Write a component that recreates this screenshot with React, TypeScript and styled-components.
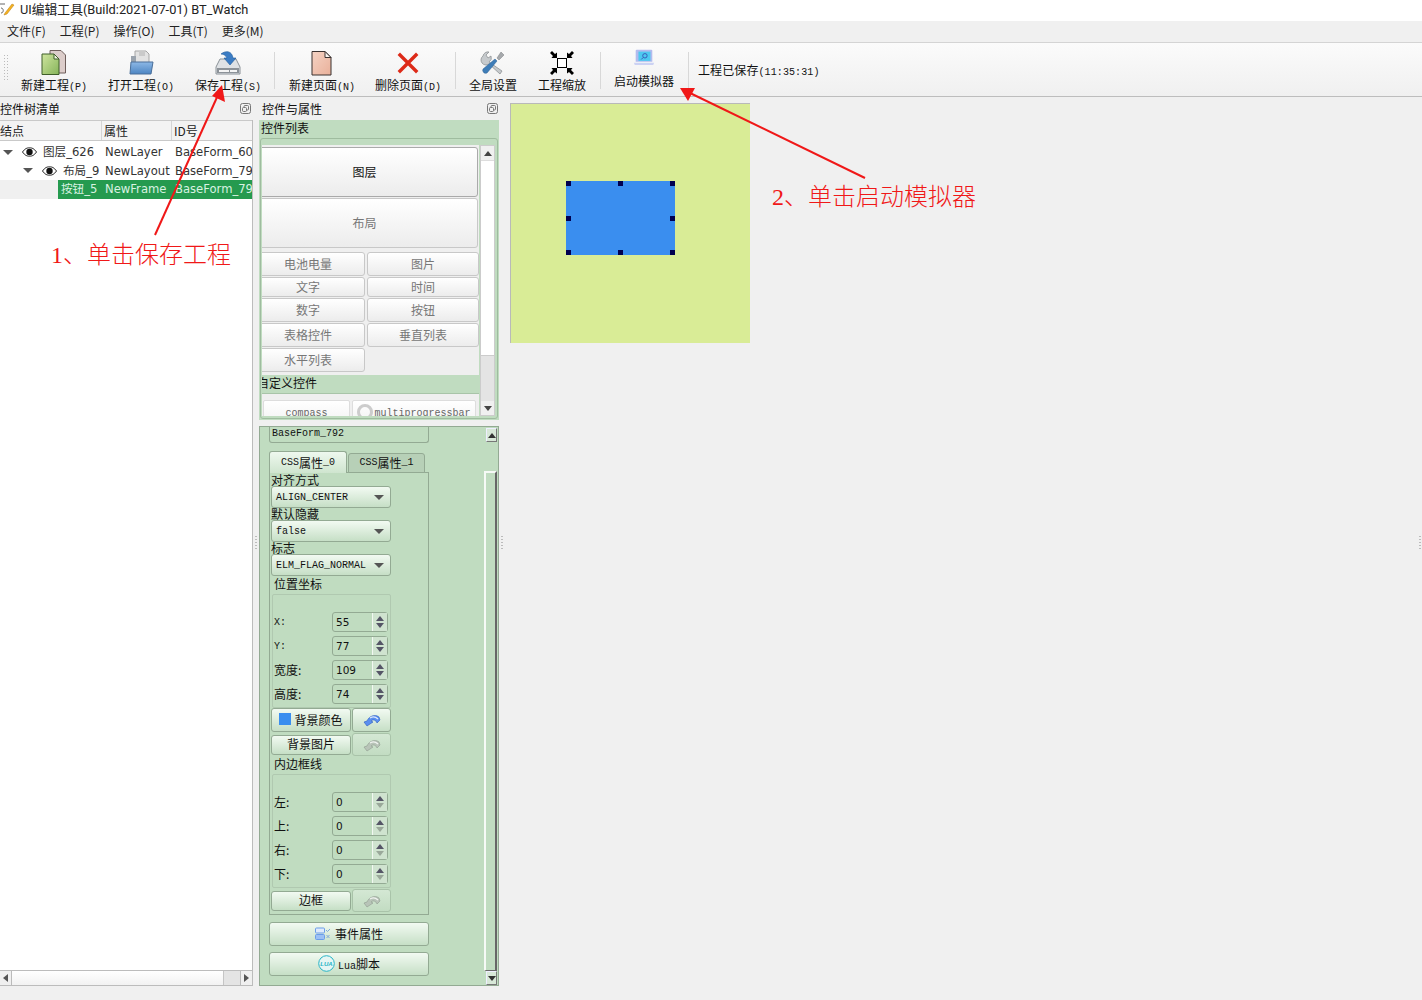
import React from "react";
import styled, { createGlobalStyle } from "styled-components";

const CJK = `"Noto Sans CJK SC", "Noto Sans", sans-serif`;
const MONO = `"Liberation Mono", "Noto Sans CJK SC", monospace`;
const UI = `"DejaVu Sans", "Noto Sans CJK SC", sans-serif`;

const Global = createGlobalStyle`
  html, body { margin: 0; padding: 0; background: #f0f0f0; }
  * { box-sizing: border-box; }
  body { font-family: ${CJK}; font-size: 12px; color: #000; overflow: hidden; }
`;

const Page = styled.div`position: relative; width: 1422px; height: 1000px; overflow: hidden; background: #f0f0f0;`;
const TitleBar = styled.div`height: 21px; background: #fff; display: flex; align-items: center; gap: 5px; padding-bottom: 4px; font: 12.8px "Roboto", ${CJK}; color: #222;`;
const MenuBar = styled.div`height: 22px; background: #f0f0f0; border-bottom: 1px solid #d4d4d4; display: flex; align-items: center; padding: 0 0 2px 7px; gap: 14px;`;
const MenuItem = styled.span`font-size: 12px; line-height: 18px; color: #222;`;
const Toolbar = styled.div`height: 54px; background: linear-gradient(#fbfbfb, #f0f0f0); border-bottom: 1px solid #bdbdbd; display: flex; align-items: stretch; position: relative;`;
const Grip = styled.div`width: 6px; margin: 11px 0 16px 3px; background-image: radial-gradient(#bbb 0.7px, transparent 0.8px); background-size: 3px 3px;`;
const ToolButton = styled.div<{ $w: number; $ml?: number }>`
  width: ${p => p.$w}px; margin-left: ${p => p.$ml ?? 0}px;
  display: flex; flex-direction: column; align-items: center; padding-top: 7px;
  font-size: 12px; line-height: 16px; color: #111; white-space: nowrap; gap: 1px;
`;
const ToolIcon = styled.svg`width: 26px; height: 26px; flex: none;`;
const SimIcon = styled(ToolIcon)`width: 24px; height: 24px; margin-top: -3px; margin-bottom: 1px;`;
const ToolSep = styled.div<{ $ml: number }>`width: 1px; margin: 9px 0 7px ${p => p.$ml}px; background: #d8d8d8;`;
const SavedText = styled.div`margin-left: 9px; align-self: center; margin-top: -1px; font-size: 12px; color: #111; letter-spacing: .1px; span { font-family: ${MONO}; font-size: 10px; }`;

const Main = styled.div`display: flex; height: 903px;`;
const LeftDock = styled.div`width: 253px; flex: none; display: flex; flex-direction: column; height: 889px;`;
const DockHeader = styled.div`height: 23px; flex: none; display: flex; align-items: center; justify-content: space-between; font-size: 12px; color: #111; padding: 0 2px 1px 0;`;
const FloatIcon = styled.svg`width: 11px; height: 11px; flex: none;`;
const TreeBox = styled.div`flex: 1; background: #fff; border-right: 1px solid #bcbcbc; border-bottom: 1px solid #bcbcbc; display: flex; flex-direction: column; min-height: 0;`;
const TreeHead = styled.div`height: 21px; flex: none; display: grid; grid-template-columns: 102px 70px 1fr; background: #f3f3f3; border-top: 1px solid #c9c9c9; border-bottom: 1px solid #c9c9c9;`;
const HeadCell = styled.div<{ $pl: number }>`padding-left: ${p => p.$pl}px; border-right: 1px solid #d5d5d5; font-size: 12px; line-height: 19px; color: #222; &:last-child { border-right: none; }`;
const TreeBody = styled.div`flex: 1; padding-top: 2px; overflow: hidden;`;
const TreeRow = styled.div<{ $shaded?: boolean }>`height: 18.5px; display: flex; align-items: center; background: ${p => p.$shaded ? "#f0f0f0" : "#fff"}; font: 11.6px ${UI}; color: #333; white-space: nowrap; overflow: hidden;`;
const Indent = styled.div<{ $w: number }>`width: ${p => p.$w}px; flex: none; display: flex; align-items: center; justify-content: flex-end; padding-right: 4px; gap: 9px;`;
const NameCell = styled.div<{ $w: number; $pl?: number }>`width: ${p => p.$w}px; flex: none; padding-left: ${p => p.$pl ?? 2}px; line-height: 18px;`;
const SelectedCells = styled.div`flex: 1; display: flex; background: #259a4f; color: #d9f2e2; height: 100%; align-items: center;`;
const Cell = styled.div<{ $w: number }>`width: ${p => p.$w}px; flex: none; overflow: hidden;`;
const HScroll = styled.div`height: 15px; flex: none; display: flex; background: #f0f0f0; border-top: 1px solid #bcbcbc;`;
const HBtn = styled.div`width: 12px; flex: none; display: flex; align-items: center; justify-content: center; background: #f0f0f0; border-right: 1px solid #bbb; &:last-child { border-left: 1px solid #bbb; border-right: none; }`;
const HThumb = styled.div`flex: 1; background: linear-gradient(#fff, #f2f2f2);`;
const HRest = styled.div`width: 17px; flex: none; background: #e4e4e4; border-left: 1px solid #c5c5c5;`;
const TriL = styled.i`border: 4px solid transparent; border-left: none; border-right: 5px solid #555;`;
const TriR = styled.i`border: 4px solid transparent; border-right: none; border-left: 5px solid #555;`;

const Splitter = styled.div<{ $w: number; $start?: boolean }>`width: ${p => p.$w}px; flex: none; display: flex; align-items: center; justify-content: ${p => p.$start ? "flex-start" : "center"}; padding-left: ${p => p.$start ? 1 : 0}px; height: 892px;`;
const Dots = styled.i`width: 2px; height: 16px; background-image: radial-gradient(#bbb .7px, transparent .8px); background-size: 2px 3px;`;

const MiddleDock = styled.div`width: 241px; flex: none; display: flex; flex-direction: column; height: 889px;`;
const MidHeader = styled(DockHeader)`padding-left: 3px; padding-right: 2px;`;
const ListPanel = styled.div`height: 300px; background: #c0dcc0; flex: none; margin-right: 1px; display: flex; flex-direction: column; overflow: hidden;`;
const ListTitle = styled.div`height: 18px; flex: none; font-size: 12px; line-height: 16px; padding-left: 2px; color: #111;`;
const ListInner = styled.div`flex: 1; margin: 0 1px 1px; border: 1px solid #9fbc9f; border-radius: 3px; padding: 6px 2px 2px 1px; display: flex; min-height: 0;`;
const ListScrollArea = styled.div`flex: 1; background: #efefef; overflow: hidden; padding: 2px 1px 0 0; display: flex; flex-direction: column; min-width: 0;`;
const ListContent = styled.div`margin-left: -11px; display: flex; flex-direction: column; flex: 1; min-height: 0;`;
const WideBtn = styled.div<{ $on?: boolean; $h: number; $mb: number }>`
  height: ${p => p.$h}px; margin-bottom: ${p => p.$mb}px; flex: none;
  display: flex; align-items: center; justify-content: center; padding-bottom: 2px;
  border: 1px solid ${p => p.$on ? "#aaa" : "#c8c8c8"}; border-radius: 3px; font-size: 12px;
  color: ${p => p.$on ? "#111" : "#777"};
  background: linear-gradient(#fff, #ececec);
`;
const BtnGrid = styled.div`display: grid; grid-template-columns: 114px 112px; column-gap: 2px; grid-template-rows: 24px 20px 24px 24px 24px; row-gap: 1px;`;
const SmallBtn = styled(WideBtn).attrs({ $h: 0, $mb: 0 })`height: auto; margin: 0;`;
const SubHeader = styled.div`height: 18px; flex: none; margin: 3px -1px 0 0; padding-left: 6px; background: #c0dcc0; font-size: 12px; line-height: 15px; white-space: nowrap; overflow: hidden; color: #111;`;
const SubInner = styled.div`flex: 1; margin: 0 -1px 0 0; background: #efefef; border-top: 1px solid #a8c4a8; padding: 6px 0 0 12px; display: flex; gap: 2px; overflow: hidden;`;
const CustomBtn = styled.div<{ $w: number }>`width: ${p => p.$w}px; height: 26px; flex: none; background: linear-gradient(#fff, #f2f2f2); border-radius: 2px; border: 1px solid #ddd; font: 10px ${MONO}; color: #666; display: flex; align-items: flex-start; justify-content: center; gap: 1px; padding-top: 7px; line-height: 12px;`;
const Ring = styled.i`width: 16px; height: 16px; margin-top: -4px; border: 3px solid #ccc; border-radius: 50%; flex: none;`;
const VScroll = styled.div`width: 15px; flex: none; margin-left: 1px; background: #fff; border: 1px solid #ccc; display: flex; flex-direction: column;`;
const VBtn = styled.div`height: 14px; flex: none; display: flex; align-items: center; justify-content: center; background: #f0f0f0;`;
const VTrack = styled.div`flex: 1; background: #fff; display: flex; flex-direction: column; justify-content: flex-end; border-top: 1px solid #ddd;`;
const VThumb = styled.div`height: 46px; background: #e4e4e4; border-top: 1px solid #ccc;`;
const TriU = styled.i<{ $c?: string }>`border: 4px solid transparent; border-top: none; border-bottom: 5px solid ${p => p.$c ?? "#444"};`;
const TriD = styled.i<{ $c?: string }>`border: 4px solid transparent; border-bottom: none; border-top: 5px solid ${p => p.$c ?? "#444"};`;

const PropPanel = styled.div`height: 560px; margin-top: 6px; margin-right: 1px; background: #c0dcc0; border: 1px solid #93aa93; display: flex; flex: none; overflow: hidden;`;
const PropColumn = styled.div`width: 160px; margin-left: 9px; flex: none; display: flex; flex-direction: column;`;
const FormBox = styled.div`height: 16px; flex: none; border: 1px solid #93aa93; border-top: none; border-radius: 0 0 3px 3px; font: 10px ${MONO}; padding-left: 2px; line-height: 13px; color: #111;`;
const Tabs = styled.div`height: 22px; margin-top: 8px; flex: none; display: flex; align-items: flex-end; position: relative; z-index: 1; margin-bottom: -1px;`;
const Tab = styled.div<{ $on?: boolean }>`
  width: ${p => p.$on ? 78 : 77}px; height: ${p => p.$on ? 22 : 20}px; margin-left: ${p => p.$on ? 0 : 1}px;
  border: 1px solid #93aa93; border-bottom: ${p => p.$on ? "none" : "1px solid #93aa93"}; border-radius: 3px 3px 0 0;
  background: ${p => p.$on ? "linear-gradient(#eef8ee, #cfe5cf)" : "#b7d0b7"};
  display: flex; align-items: center; justify-content: center; padding-bottom: 1px; font-size: 12px; color: #111; white-space: nowrap;
  span { font-family: ${MONO}; font-size: 10px; }
`;
const TabPane = styled.div`height: 443px; flex: none; border: 1px solid #93aa93; padding: 1px 1px 0 1px; display: flex; flex-direction: column;`;
const FieldLabel = styled.div<{ $pl?: number; $h?: number }>`height: ${p => p.$h ?? 12}px; padding-left: ${p => p.$pl ?? 0}px; font-size: 12px; line-height: ${p => p.$h ? p.$h - 3 : 11}px; white-space: nowrap; color: #111; flex: none;`;
const Combo = styled.div`width: 120px; height: 22px; flex: none; border: 1px solid #93aa93; border-radius: 3px; background: linear-gradient(#f2faf2, #c6dfc6); font: 10px ${MONO}; display: flex; align-items: center; justify-content: space-between; padding: 0 6px 0 4px; color: #111; white-space: nowrap;`;
const GroupBox = styled.div<{ $pt: number }>`width: 119px; height: 114px; flex: none; margin-left: 1px; border: 1px solid #b0c9b0; border-radius: 2px; padding-top: ${p => p.$pt}px; display: flex; flex-direction: column; gap: 4px;`;
const SpinRow = styled.div`height: 20px; flex: none; display: flex; align-items: center; padding-left: 1px; justify-content: space-between; padding-right: 2px;`;
const SpinLabel = styled.span<{ $mono?: boolean }>`font-size: ${p => p.$mono ? 10 : 12}px; font-family: ${p => p.$mono ? MONO : CJK}; color: #111; white-space: nowrap; margin-top: ${p => p.$mono ? 0 : -2}px;`;
const SpinBox = styled.div`width: 56px; height: 20px; border: 1px solid #93aa93; border-radius: 3px; display: flex; background: #c0dcc0;`;
const SpinValue = styled.div`flex: 1; padding-left: 3px; font: 10.5px/18px ${UI}; color: #111;`;
const SpinArrows = styled.div`width: 15px; padding-right: 1px; border-left: 1px solid #f2f8f2; background: #cfe3cf; display: flex; flex-direction: column; align-items: center; justify-content: center; gap: 2px;`;
const BtnRow = styled.div<{ $mt?: number }>`display: flex; flex: none; gap: 1px; margin-top: ${p => p.$mt ?? 0}px; align-items: center;`;
const FlatBtn = styled.div<{ $h: number }>`width: 80px; height: ${p => p.$h}px; flex: none; border: 1px solid #93aa93; border-radius: 3px; background: linear-gradient(#f2faf2, #c6dfc6); display: flex; align-items: center; justify-content: center; padding-bottom: 2px; font-size: 12px; gap: 3px; color: #111;`;
const IconBtn = styled.div<{ $h: number; $dim?: boolean }>`width: 39px; height: ${p => p.$h}px; flex: none; border: 1px solid ${p => p.$dim ? "#a9c3a9" : "#93aa93"}; border-radius: 3px; background: ${p => p.$dim ? "linear-gradient(#d4e8d4, #c2dcc2)" : "linear-gradient(#f2faf2, #c6dfc6)"}; display: flex; align-items: center; justify-content: center;`;
const Swatch = styled.i`width: 12px; height: 12px; background: #3a8eef; flex: none;`;
const UndoIcon = styled.svg`width: 18px; height: 14px;`;
const LongBtn = styled.div<{ $mt: number }>`height: 24px; flex: none; margin-top: ${p => p.$mt}px; border: 1px solid #93aa93; border-radius: 3px; background: linear-gradient(#f2faf2, #c6dfc6); display: flex; align-items: center; justify-content: center; gap: 3px; padding-bottom: 1px; font-size: 12px; color: #111; b { font: 400 10px ${MONO}; }`;
const PropScroll = styled.div`width: 13px; margin-left: auto; margin-right: 1px; flex: none; display: flex; flex-direction: column; padding-top: 1px;`;
const PBtn = styled.div`height: 14px; width: 11px; margin-left: 2px; flex: none; display: flex; align-items: center; justify-content: center; background: #d8e8d8; border-right: 1px solid #777; border-bottom: 1px solid #777; border-top: 1px solid #eef; border-left: 1px solid #eef;`;
const PTrack = styled.div`flex: 1; margin: 29px 0 0; border-left: 2px solid #f6faf6; border-top: 2px solid #f6faf6; border-right: 2px solid #666; border-bottom: 1px solid #666; background: #c0dcc0;`;

const CanvasArea = styled.div`flex: 1; padding: 6px 0 0 0; position: relative;`;
const Screen = styled.div`width: 240px; height: 240px; background: #d9ec96; border-top: 1px solid #b9b9b9; border-left: 1px solid #b9b9b9; position: relative;`;
const Widget = styled.div`position: absolute; left: 55px; top: 77px; width: 109px; height: 74px; background: #3a8eef;`;
const Handle = styled.i<{ $x: number; $y: number }>`position: absolute; left: ${p => p.$x}px; top: ${p => p.$y}px; width: 5px; height: 5px; background: #000050;`;
const RightGrip = styled.div`position: absolute; right: 0; top: 438px; width: 5px; display: flex; justify-content: center;`;

const Overlay = styled.svg`position: absolute; left: 0; top: 0; width: 1422px; height: 1000px; pointer-events: none;`;
const Note = styled.div<{ $x: number; $y: number }>`position: absolute; left: ${p => p.$x}px; top: ${p => p.$y}px; color: #f01818; font-size: 24px; line-height: 30px; font-weight: 300; white-space: nowrap; b { font: 400 24px "Liberation Serif", serif; }`;
const Key = styled.span`font: 10px ${MONO};`;
const Caret = styled.i`border: 5px solid transparent; border-bottom: none; border-top: 5px solid #555; flex: none;`;

const AppLogo = () => (
  <svg width="15" height="15" viewBox="0 0 15 15" style={{ flex: "none" }}>
    <path d="M0 3h5M1 7c3 0 3 5 0 5" fill="none" stroke="#666" strokeWidth="1" />
    <path d="M5 12l7-9 2 1-7 9-3 1z" fill="#f5b321" stroke="#b97a12" strokeWidth=".5" />
  </svg>
);

const IconNew = () => (
  <ToolIcon viewBox="0 0 26 26">
    <defs><linearGradient id="gNew" x1="0" y1="0" x2="1" y2="1"><stop offset="0" stopColor="#cfe59f" /><stop offset="1" stopColor="#86b45a" /></linearGradient></defs>
    <path d="M9 0.500h11l4.500 4.500v18H9z" fill="#dccdca" stroke="#6f5f5c" />
    <path d="M1 4h12l5 5v15.500H1z" fill="url(#gNew)" stroke="#3f5e2a" />
    <path d="M13 4v5h5z" fill="#f2f7e3" stroke="#3f5e2a" />
  </ToolIcon>
);
const IconOpen = () => (
  <ToolIcon viewBox="0 0 26 26">
    <defs><linearGradient id="gOpen" x1="0" y1="0" x2="0" y2="1"><stop offset="0" stopColor="#8db8e6" /><stop offset="1" stopColor="#4d85c2" /></linearGradient></defs>
    <path d="M7 1h11l3 3v9H7z" fill="#e2e2e2" stroke="#a5a5a5" />
    <path d="M11 1h6v5h-6z" fill="#c9c9c9" />
    <path d="M3 6h5v6H3z" fill="#9aa3ad" />
    <path d="M3 12h22l-2 12H2z" fill="url(#gOpen)" stroke="#4a6f9a" />
  </ToolIcon>
);
const IconSave = () => (
  <ToolIcon viewBox="0 0 26 26">
    <path d="M5 9h16l4 8v7H1v-7z" fill="#dfe2e5" stroke="#8b9298" />
    <path d="M2 18h22v5H2z" fill="#8c9298" />
    <path d="M4 20h10v2H4z M15 20h7v2h-7z" fill="#f4f4f4" />
    <path d="M6 4c5-4 11-3 12 4h3l-6 7-6-7h3c-1-2-3-4-6-4z" fill="#3b7cc4" stroke="#1f5a9a" strokeWidth=".6" />
  </ToolIcon>
);
const IconPage = () => (
  <ToolIcon viewBox="0 0 26 26">
    <defs><linearGradient id="gPage" x1="0" y1="0" x2="1" y2="1"><stop offset="0" stopColor="#f5d3c4" /><stop offset="1" stopColor="#e9b09a" /></linearGradient></defs>
    <path d="M3 1.500h13l6 6V25H3z" fill="url(#gPage)" stroke="#3a3230" strokeLinejoin="round" />
    <path d="M16 1.500v6h6z" fill="#f7f3f0" stroke="#3a3230" />
  </ToolIcon>
);
const IconDelete = () => (
  <ToolIcon viewBox="0 0 26 26">
    <path d="M5 5l16 16M21 5L5 21" stroke="#dd2a18" strokeWidth="3.400" strokeLinecap="square" />
  </ToolIcon>
);
const IconTools = () => (
  <ToolIcon viewBox="0 0 26 26">
    <path d="M3 6a5 5 0 0 1 6-4L6 5l2 3 3-2a5 5 0 0 1-2 6l13 9-2 3L9 14a5 5 0 0 1-6-8z" fill="#c6cacd" stroke="#85898d" strokeWidth=".7" />
    <path d="M21 2l3 3-5 5-2-2z" fill="#a6a9ac" stroke="#7a7d80" strokeWidth=".5" />
    <path d="M15 9l2 2L7 23a3 3 0 0 1-4-4z" fill="#3e7db8" stroke="#2b5f92" strokeWidth=".5" />
  </ToolIcon>
);
const ScaleArrow = ({ t }: { t: string }) => (
  <path transform={t} d="M1 3L3 1L6 4L8 2.500V8H2.500L4 6Z" fill="#000" />
);
const IconScale = () => (
  <ToolIcon viewBox="0 0 26 26">
    <rect x="8.500" y="8.500" width="9" height="9" fill="#fff" stroke="#000" />
    <ScaleArrow t="" />
    <ScaleArrow t="translate(26 0) scale(-1 1)" />
    <ScaleArrow t="translate(0 26) scale(1 -1)" />
    <ScaleArrow t="translate(26 26) scale(-1 -1)" />
  </ToolIcon>
);
const IconSim = () => (
  <SimIcon viewBox="0 0 26 26">
    <path d="M5 3h16a1 1 0 0 1 1 1v12H4V4a1 1 0 0 1 1-1z" fill="#b3bbee" />
    <path d="M7 5h13v10H7z" fill="#4cc9f0" />
    <circle cx="14" cy="9.500" r="2.400" fill="none" stroke="#3a55b5" />
    <path d="M12 11.500l-2 2" stroke="#3a55b5" />
    <path d="M2 17h22l-1 2.500H3z" fill="#ccd2f3" />
  </SimIcon>
);
const Float = () => (
  <FloatIcon viewBox="0 0 11 11">
    <rect x=".5" y=".5" width="10" height="10" rx="2" fill="none" stroke="#777" />
    <rect x="4" y="2.500" width="4.500" height="4.500" rx="1" fill="none" stroke="#777" />
    <rect x="2.500" y="4.500" width="4" height="4" rx="1" fill="#f0f0f0" stroke="#777" />
  </FloatIcon>
);
const Eye = () => (
  <svg width="15" height="10" viewBox="0 0 15 10">
    <path d="M.5 5C3 1.500 5 .8 7.500.8S12 1.500 14.500 5C12 8.500 10 9.200 7.500 9.200S3 8.500.5 5z" fill="#fff" stroke="#222" />
    <circle cx="7.500" cy="5" r="3.200" fill="#111" />
  </svg>
);
const Undo = ({ dim }: { dim?: boolean }) => (
  <UndoIcon viewBox="0 0 18 14">
    <path d="M1 9l3-1c2-5 8-7 12-4l1 3-3 3c-1-3-4-4-6-2l2 1-6 4z" fill={dim ? "#b8c4b8" : "#5a8ff0"} stroke={dim ? "#8e9a8e" : "#2a5ac0"} strokeWidth=".6" />
    <path d="M7 5c3-2 6-1 8 1" stroke="#fff" fill="none" strokeWidth="1.200" opacity=".8" />
  </UndoIcon>
);
const EventIcon = () => (
  <svg width="16" height="13" viewBox="0 0 16 13" style={{ marginRight: 1 }}>
    <rect x=".5" y="1" width="9" height="5" rx="1" fill="#dfeafc" stroke="#6b9de8" />
    <rect x=".5" y="7.500" width="9" height="5" rx="1" fill="#9cc0f5" stroke="#6b9de8" />
    <path d="M11 3l1.500 1.500L15 2M11.500 8l3 3M14.500 8l-3 3" fill="none" stroke="#7fa8d8" />
  </svg>
);
const LuaIcon = () => (
  <svg width="17" height="17" viewBox="0 0 17 17">
    <circle cx="8.500" cy="8.500" r="7.800" fill="#e6f6f4" stroke="#27b4c6" />
    <text x="8.500" y="10.800" textAnchor="middle" fontSize="6" fontStyle="italic" fontWeight="700" fill="#27b4c6" fontFamily="Liberation Sans">LUA</text>
  </svg>
);

const Spin = ({ label, value, mono, dim }: { label: string; value: string; mono?: boolean; dim?: boolean }) => (
  <SpinRow>
    <SpinLabel $mono={mono}>{label}</SpinLabel>
    <SpinBox>
      <SpinValue>{value}</SpinValue>
      <SpinArrows>
        <TriU $c="#556" />
        <TriD $c={dim ? "#9aa89a" : "#556"} />
      </SpinArrows>
    </SpinBox>
  </SpinRow>
);

const tools = [
  { label: "新建工程", key: "(P)", ml: 12, icon: <IconNew /> },
  { label: "打开工程", key: "(O)", ml: 21, icon: <IconOpen /> },
  { label: "保存工程", key: "(S)", ml: 21, icon: <IconSave /> },
];

export default function App() {
  return (
    <Page>
      <Global />
      <TitleBar>
        <AppLogo />
        <span>UI编辑工具(Build:2021-07-01) BT_Watch</span>
      </TitleBar>
      <MenuBar>
        {["文件(F)", "工程(P)", "操作(O)", "工具(T)", "更多(M)"].map(m => <MenuItem key={m}>{m}</MenuItem>)}
      </MenuBar>
      <Toolbar>
        <Grip />
        {tools.map(t => (
          <ToolButton key={t.label} $w={66} $ml={t.ml}>
            {t.icon}
            <span>{t.label}<Key>{t.key}</Key></span>
          </ToolButton>
        ))}
        <ToolSep $ml={13} />
        <ToolButton $w={66} $ml={14}><IconPage /><span>新建页面<Key>(N)</Key></span></ToolButton>
        <ToolButton $w={66} $ml={20}><IconDelete /><span>删除页面<Key>(D)</Key></span></ToolButton>
        <ToolSep $ml={14} />
        <ToolButton $w={48} $ml={13}><IconTools /><span>全局设置</span></ToolButton>
        <ToolButton $w={48} $ml={21}><IconScale /><span>工程缩放</span></ToolButton>
        <ToolSep $ml={14} />
        <ToolButton $w={60} $ml={13}><IconSim /><span>启动模拟器</span></ToolButton>
        <ToolSep $ml={14} />
        <SavedText>工程已保存<span>(11:35:31)</span></SavedText>
      </Toolbar>
      <Main>
        <LeftDock>
          <DockHeader><span>控件树清单</span><Float /></DockHeader>
          <TreeBox>
            <TreeHead>
              <HeadCell $pl={0}>结点</HeadCell>
              <HeadCell $pl={2}>属性</HeadCell>
              <HeadCell $pl={2}>ID号</HeadCell>
            </TreeHead>
            <TreeBody>
              <TreeRow>
                <Indent $w={41}><Caret /><Eye /></Indent>
                <NameCell $w={64}>图层_626</NameCell>
                <Cell $w={70}>NewLayer</Cell>
                <Cell $w={77}>BaseForm_60</Cell>
              </TreeRow>
              <TreeRow>
                <Indent $w={61}><Caret /><Eye /></Indent>
                <NameCell $w={44}>布局_9</NameCell>
                <Cell $w={70}>NewLayout</Cell>
                <Cell $w={77}>BaseForm_79</Cell>
              </TreeRow>
              <TreeRow $shaded>
                <Indent $w={58} />
                <SelectedCells>
                  <NameCell $w={47} $pl={3}>按钮_5</NameCell>
                  <Cell $w={70}>NewFrame</Cell>
                  <Cell $w={77}>BaseForm_79</Cell>
                </SelectedCells>
              </TreeRow>
            </TreeBody>
            <HScroll>
              <HBtn><TriL /></HBtn>
              <HThumb />
              <HRest />
              <HBtn><TriR /></HBtn>
            </HScroll>
          </TreeBox>
        </LeftDock>
        <Splitter $w={6}><Dots /></Splitter>
        <MiddleDock>
          <MidHeader><span>控件与属性</span><Float /></MidHeader>
          <ListPanel>
            <ListTitle>控件列表</ListTitle>
            <ListInner>
              <ListScrollArea>
                <ListContent>
                  <WideBtn $on $h={50} $mb={1}>图层</WideBtn>
                  <WideBtn $h={50} $mb={4}>布局</WideBtn>
                  <BtnGrid>
                    {["电池电量", "图片", "文字", "时间", "数字", "按钮", "表格控件", "垂直列表", "水平列表"].map(b => <SmallBtn key={b}>{b}</SmallBtn>)}
                  </BtnGrid>
                  <SubHeader>自定义控件</SubHeader>
                  <SubInner>
                    <CustomBtn $w={87}>compass</CustomBtn>
                    <CustomBtn $w={124}><Ring />multiprogressbar</CustomBtn>
                  </SubInner>
                </ListContent>
              </ListScrollArea>
              <VScroll>
                <VBtn><TriU /></VBtn>
                <VTrack><VThumb /></VTrack>
                <VBtn><TriD /></VBtn>
              </VScroll>
            </ListInner>
          </ListPanel>
          <PropPanel>
            <PropColumn>
              <FormBox>BaseForm_792</FormBox>
              <Tabs>
                <Tab $on><span>CSS</span>属性<span>_0</span></Tab>
                <Tab><span>CSS</span>属性<span>_1</span></Tab>
              </Tabs>
              <TabPane>
                <FieldLabel>对齐方式</FieldLabel>
                <Combo>ALIGN_CENTER<Caret /></Combo>
                <FieldLabel>默认隐藏</FieldLabel>
                <Combo>false<Caret /></Combo>
                <FieldLabel>标志</FieldLabel>
                <Combo>ELM_FLAG_NORMAL<Caret /></Combo>
                <FieldLabel $pl={3} $h={18}>位置坐标</FieldLabel>
                <GroupBox $pt={17}>
                  <Spin mono label="X:" value="55" />
                  <Spin mono label="Y:" value="77" />
                  <Spin label="宽度:" value="109" />
                  <Spin label="高度:" value="74" />
                </GroupBox>
                <BtnRow>
                  <FlatBtn $h={24}><Swatch />背景颜色</FlatBtn>
                  <IconBtn $h={24}><Undo /></IconBtn>
                </BtnRow>
                <BtnRow $mt={1}>
                  <FlatBtn $h={20}>背景图片</FlatBtn>
                  <IconBtn $h={23} $dim><Undo dim /></IconBtn>
                </BtnRow>
                <FieldLabel $pl={3} $h={18}>内边框线</FieldLabel>
                <GroupBox $pt={17}>
                  <Spin label="左:" value="0" dim />
                  <Spin label="上:" value="0" dim />
                  <Spin label="右:" value="0" dim />
                  <Spin label="下:" value="0" dim />
                </GroupBox>
                <BtnRow $mt={1}>
                  <FlatBtn $h={20}>边框</FlatBtn>
                  <IconBtn $h={23} $dim><Undo dim /></IconBtn>
                </BtnRow>
              </TabPane>
              <LongBtn $mt={7}><EventIcon />事件属性</LongBtn>
              <LongBtn $mt={6}><LuaIcon /><span><b>Lua</b>脚本</span></LongBtn>
            </PropColumn>
            <PropScroll>
              <PBtn><TriU $c="#333" /></PBtn>
              <PTrack />
              <PBtn><TriD $c="#333" /></PBtn>
            </PropScroll>
          </PropPanel>
        </MiddleDock>
        <Splitter $w={10} $start><Dots /></Splitter>
        <CanvasArea>
          <Screen>
            <Widget>
              <Handle $x={0} $y={0} /><Handle $x={52} $y={0} /><Handle $x={104} $y={0} />
              <Handle $x={0} $y={35} /><Handle $x={104} $y={35} />
              <Handle $x={0} $y={69} /><Handle $x={52} $y={69} /><Handle $x={104} $y={69} />
            </Widget>
          </Screen>
          <RightGrip><Dots /></RightGrip>
        </CanvasArea>
      </Main>
      <Overlay viewBox="0 0 1422 1000">
        <path d="M155 235L218 95" stroke="#f01818" strokeWidth="2" fill="none" />
        <path d="M222 85L225 102L212 96Z" fill="#f01818" />
        <path d="M865 178L690 93" stroke="#f01818" strokeWidth="2" fill="none" />
        <path d="M680 88L695 88L688 101Z" fill="#f01818" />
      </Overlay>
      <Note $x={51} $y={238}><b>1</b>、单击保存工程</Note>
      <Note $x={772} $y={180}><b>2</b>、单击启动模拟器</Note>
    </Page>
  );
}
